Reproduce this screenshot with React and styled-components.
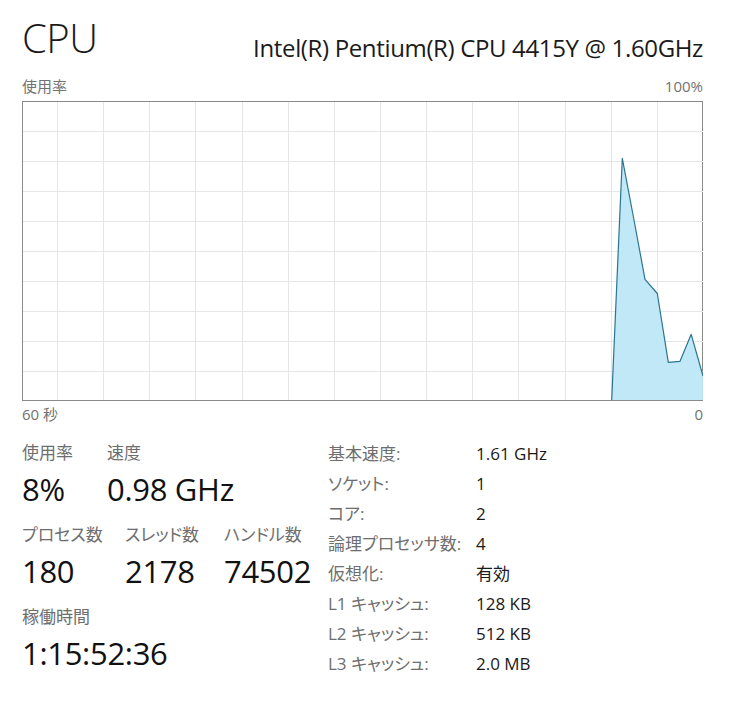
import React from 'react';
import styled, { createGlobalStyle } from 'styled-components';

const GlobalStyle = createGlobalStyle`
  body {
    margin: 0;
    background: #ffffff;
    font-family: 'Open Sans', 'Noto Sans CJK JP', sans-serif;
    font-feature-settings: 'palt';
  }
`;

const Page = styled.div`
  width: 681px;
  padding: 11px 0 0 22px;
  color: #1a1a1a;
`;

const Header = styled.div`
  display: flex;
  justify-content: space-between;
  align-items: flex-end;
`;

const Title = styled.div`
  font-size: 40px;
  font-weight: 300;
  line-height: 54px;
  letter-spacing: -0.5px;
`;

const ProcessorName = styled.div`
  font-size: 24px;
  font-weight: 400;
  line-height: 26px;
  margin-bottom: 4px;
  letter-spacing: -0.35px;
`;

const AxisRow = styled.div`
  display: flex;
  justify-content: space-between;
  font-size: 15px;
  line-height: 18px;
  color: #727272;
  margin-top: ${(p) => p.$top || 0}px;
`;

const ChartFrame = styled.div`
  border: 1px solid #8a8a8a;
  height: 298px;
  margin-top: 6px;
  background: #ffffff;

  svg {
    display: block;
  }
`;

const Stats = styled.div`
  display: flex;
  margin-top: 19px;
`;

const LeftStats = styled.div`
  width: 306px;
  display: flex;
  flex-direction: column;
`;

const StatRow = styled.div`
  display: flex;
  margin-bottom: 16px;
`;

const Stat = styled.div`
  width: ${(p) => p.$w || 'auto'};
  display: flex;
  flex-direction: column;
`;

const StatLabel = styled.div`
  font-size: 17px;
  line-height: 22px;
  color: #6e6e6e;
  white-space: nowrap;
`;

const StatValue = styled.div`
  font-size: 31px;
  line-height: 38px;
  color: #111111;
  margin-top: 6px;
  letter-spacing: -0.3px;
`;

const InfoTable = styled.div`
  display: grid;
  grid-template-columns: 148px auto;
  grid-auto-rows: 30px;
  font-size: 17px;
  line-height: 30px;
  margin-top: -3px;
`;

const InfoLabel = styled.div`
  color: #6e6e6e;
  white-space: nowrap;
`;

const InfoValue = styled.div`
  color: #1a1a1a;
`;

const points = [
  [611.7, 400],
  [622.3, 158.3],
  [634, 220],
  [645, 279.3],
  [657.3, 293.5],
  [668.3, 362.3],
  [680, 361.3],
  [691.2, 334.3],
  [703, 376],
];

function UsageChart() {
  const w = 680;
  const h = 298;
  const ox = 23;
  const oy = 102;
  const hLines = [];
  for (let y = 131; y < 400; y += 30) hLines.push(y - oy);
  const vLines = [];
  for (let x = 57; x < 703; x += 46.15) vLines.push(x - ox);
  const pts = points.map(([x, y]) => [x - ox, y - oy]);
  const line = pts.map((p) => p.join(',')).join(' ');
  const area = `${line} ${w},${h} ${pts[0][0]},${h}`;

  return (
    <svg width={w} height={h} viewBox={`0 0 ${w} ${h}`}>
      {hLines.map((y) => (
        <line key={'h' + y} x1={0} x2={w} y1={y + 0.5} y2={y + 0.5} stroke='#e6e6e6' strokeWidth='1' />
      ))}
      {vLines.map((x) => (
        <line key={'v' + x} x1={Math.round(x) + 0.5} x2={Math.round(x) + 0.5} y1={0} y2={h} stroke='#e6e6e6' strokeWidth='1' />
      ))}
      <polygon points={area} fill='#bde7f6' fillOpacity='0.95' />
      <polyline points={line} fill='none' stroke='#2b7590' strokeWidth='1.2' strokeLinejoin='round' />
    </svg>
  );
}

const info = [
  ['基本速度:', '1.61 GHz'],
  ['ソケット:', '1'],
  ['コア:', '2'],
  ['論理プロセッサ数:', '4'],
  ['仮想化:', '有効'],
  ['L1 キャッシュ:', '128 KB'],
  ['L2 キャッシュ:', '512 KB'],
  ['L3 キャッシュ:', '2.0 MB'],
];

export default function App() {
  return (
    <>
      <GlobalStyle />
      <Page>
        <Header>
          <Title>CPU</Title>
          <ProcessorName>Intel(R) Pentium(R) CPU 4415Y @ 1.60GHz</ProcessorName>
        </Header>
        <AxisRow $top={12}>
          <span>使用率</span>
          <span>100%</span>
        </AxisRow>
        <ChartFrame>
          <UsageChart />
        </ChartFrame>
        <AxisRow $top={4}>
          <span>60 秒</span>
          <span>0</span>
        </AxisRow>
        <Stats>
          <LeftStats>
            <StatRow>
              <Stat $w='85px'>
                <StatLabel>使用率</StatLabel>
                <StatValue>8%</StatValue>
              </Stat>
              <Stat>
                <StatLabel>速度</StatLabel>
                <StatValue>0.98 GHz</StatValue>
              </Stat>
            </StatRow>
            <StatRow>
              <Stat $w='103px'>
                <StatLabel>プロセス数</StatLabel>
                <StatValue>180</StatValue>
              </Stat>
              <Stat $w='99px'>
                <StatLabel>スレッド数</StatLabel>
                <StatValue>2178</StatValue>
              </Stat>
              <Stat>
                <StatLabel>ハンドル数</StatLabel>
                <StatValue>74502</StatValue>
              </Stat>
            </StatRow>
            <StatRow>
              <Stat>
                <StatLabel>稼働時間</StatLabel>
                <StatValue>1:15:52:36</StatValue>
              </Stat>
            </StatRow>
          </LeftStats>
          <InfoTable>
            {info.map(([k, v]) => (
              <React.Fragment key={k}>
                <InfoLabel>{k}</InfoLabel>
                <InfoValue>{v}</InfoValue>
              </React.Fragment>
            ))}
          </InfoTable>
        </Stats>
      </Page>
    </>
  );
}
